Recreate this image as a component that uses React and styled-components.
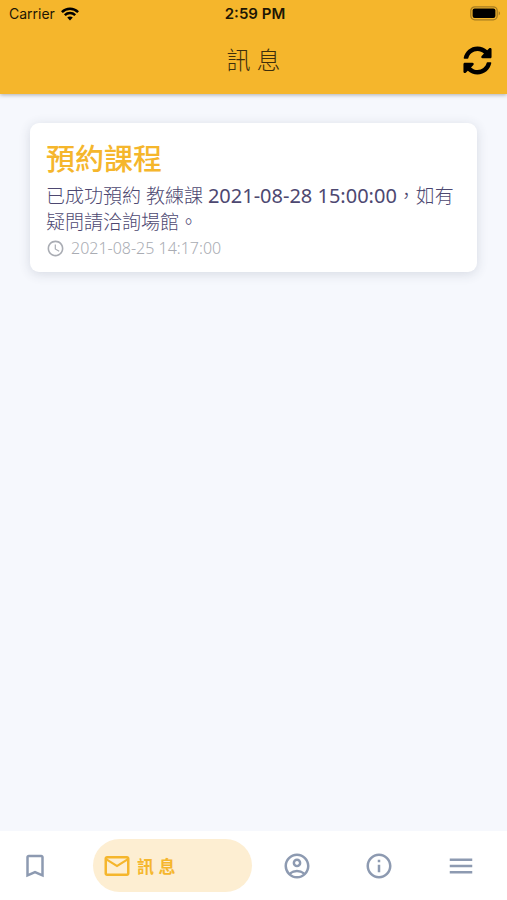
import React from "react";
import styled, { createGlobalStyle } from "styled-components";
import {
  MdBookmarkBorder,
  MdOutlineEmail,
  MdOutlineAccountCircle,
  MdInfoOutline,
  MdMenu,
  MdAccessTime,
} from "react-icons/md";
import { FaSyncAlt } from "react-icons/fa";

const GlobalStyle = createGlobalStyle`
  *, *::before, *::after { box-sizing: border-box; }
  body {
    margin: 0;
    background: #f6f8fd;
    font-family: "Noto Sans", "Noto Sans CJK TC", sans-serif;
  }
  button { font: inherit; }
`;

const Screen = styled.div`
  display: flex;
  flex-direction: column;
  min-height: 100vh;
`;

const TopBar = styled.header`
  background: #f5b62c;
  color: #000;
  box-shadow: 0 1px 4px rgba(60, 60, 60, 0.4);
`;

const StatusBar = styled.div`
  display: grid;
  grid-template-columns: 1fr auto 1fr;
  align-items: center;
  height: 27px;
  padding: 0 6px 0 9px;
  font-family: Inter, sans-serif;
  font-size: 14px;
  color: #1d1604;
`;

const Carrier = styled.span`
  display: flex;
  align-items: center;
  gap: 6px;
`;

const Clock = styled.span`
  font-size: 15px;
  font-weight: 600;
`;

const Battery = styled.svg`
  justify-self: end;
`;

const TitleBar = styled.div`
  display: grid;
  grid-template-columns: 1fr auto 1fr;
  align-items: center;
  height: 67px;
  padding: 0 15px 1px;
`;

const PageTitle = styled.h1`
  grid-column: 2;
  margin: 0;
  font-size: 24px;
  line-height: 32px;
  font-weight: 300;
  color: #3d2e0c;
`;

const RefreshButton = styled.button`
  display: flex;
  justify-self: end;
  padding: 0;
  border: 0;
  background: none;
  color: #000;
  cursor: pointer;
`;

const Content = styled.main`
  flex: 1;
  padding: 29px 30px;
`;

const Card = styled.article`
  padding: 16px 16px 14px;
  border-radius: 9px;
  background: #fff;
  box-shadow: 0 2px 12px rgba(50, 60, 90, 0.16);
`;

const CardTitle = styled.h2`
  margin: 0;
  font-size: 29px;
  line-height: 40px;
  font-weight: 500;
  color: #f5b62c;
`;

const Message = styled.p`
  margin: 4px 0 3px;
  font-size: 19px;
  line-height: 26px;
  font-weight: 300;
  color: #4d4871;
`;

const BookedTime = styled.time`
  font-size: 20px;
  font-weight: 400;
`;

const Sent = styled.div`
  display: flex;
  align-items: center;
  gap: 6px;
  font-size: 16px;
  line-height: 20px;
  font-weight: 300;
  color: #a9acb3;
`;

const TabBar = styled.nav`
  display: grid;
  grid-template-columns: 70fr 186fr 82fr 82fr 82fr;
  align-items: center;
  padding: 8px 5px 8px 0;
  background: #fff;
`;

const Tab = styled.button`
  display: flex;
  align-items: center;
  justify-content: ${(p) => (p.$active ? "flex-start" : "center")};
  gap: 5px;
  height: 53px;
  margin: ${(p) => (p.$active ? "0 4px 0 23px" : "0")};
  padding: ${(p) => (p.$active ? "0 9px" : "0")};
  border: 0;
  border-radius: 27px;
  background: ${(p) => (p.$active ? "#fdeed2" : "transparent")};
  color: ${(p) => (p.$active ? "#f5b62c" : "#8d9ab1")};
  font-size: 17px;
  font-weight: 700;
  cursor: pointer;
`;

const tabs = [
  { name: "書籤", Icon: MdBookmarkBorder },
  { name: "訊 息", Icon: MdOutlineEmail, active: true },
  { name: "帳號", Icon: MdOutlineAccountCircle },
  { name: "資訊", Icon: MdInfoOutline },
  { name: "選單", Icon: MdMenu },
];

function WifiIcon() {
  return (
    <svg width="18" height="14" viewBox="0 0 18 14" fill="none" stroke="#000" strokeWidth="2.5" aria-hidden="true">
      <path d="M0.9 5.2C5.5 0.7 12.5 0.7 17.1 5.2" />
      <path d="M3.8 8.2C6.8 5.4 11.2 5.4 14.2 8.2" />
      <path d="M6.2 10.6C7.8 9 10.2 9 11.8 10.6L9 13.6Z" fill="#000" stroke="none" />
    </svg>
  );
}

function BatteryIcon() {
  return (
    <Battery width="31" height="15" viewBox="0 0 31 15" aria-hidden="true">
      <rect x="0.8" y="0.8" width="26.4" height="13" rx="4" fill="none" stroke="#a67c20" strokeWidth="1.3" />
      <rect x="2.6" y="2.6" width="22.8" height="9.4" rx="2" fill="#000" />
      <path d="M28.7 5.2C30.5 5.8 30.5 8.8 28.7 9.4Z" fill="#a67c20" />
    </Battery>
  );
}

export default function App() {
  return (
    <Screen lang="zh-Hant">
      <GlobalStyle />
      <TopBar>
        <StatusBar>
          <Carrier>
            Carrier <WifiIcon />
          </Carrier>
          <Clock>2:59 PM</Clock>
          <BatteryIcon />
        </StatusBar>
        <TitleBar>
          <PageTitle>訊 息</PageTitle>
          <RefreshButton type="button" aria-label="重新整理">
            <FaSyncAlt size={29} />
          </RefreshButton>
        </TitleBar>
      </TopBar>
      <Content>
        <Card>
          <CardTitle>預約課程</CardTitle>
          <Message>
            已成功預約 教練課 <BookedTime>2021-08-28 15:00:00</BookedTime>，如有疑問請洽詢場館。
          </Message>
          <Sent>
            <MdAccessTime size={19} />
            <time>2021-08-25 14:17:00</time>
          </Sent>
        </Card>
      </Content>
      <TabBar>
        {tabs.map(({ name, Icon, active }) => (
          <Tab
            key={name}
            type="button"
            $active={active}
            aria-label={name}
            aria-current={active ? "page" : undefined}
          >
            <Icon size={30} />
            {active && <span>{name}</span>}
          </Tab>
        ))}
      </TabBar>
    </Screen>
  );
}
